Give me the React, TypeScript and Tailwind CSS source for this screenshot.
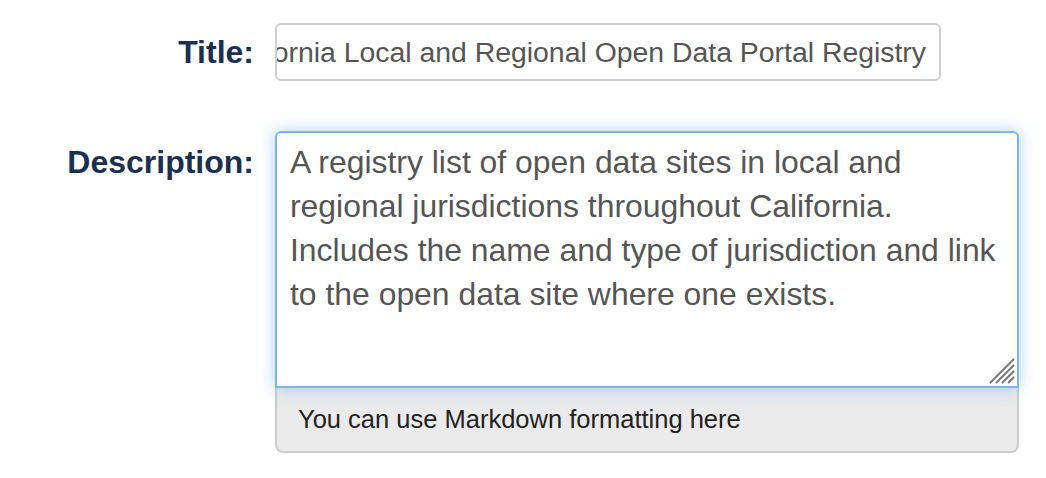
import React from 'react';

export default function App() {
    const title = "California Local and Regional Open Data Portal Registry";
    const description =
        "A registry list of open data sites in local and regional jurisdictions throughout California. Includes the name and type of jurisdiction and link to the open data site where one exists.";

    return (
        <div className="w-[1046px] h-[478px] bg-white font-['Liberation_Sans',Arial,sans-serif]">
            <div className="flex flex-col gap-[50px] pt-[23px]">
                {/* title row */}
                <div className="flex items-center">
                    <label className="w-[254px] text-right text-[32px] leading-[44px] font-bold text-[#1b3050]">Title:</label>
                    <div className="ml-[21px] w-[666px] h-[58px] border-2 border-[#cfcfcf] rounded-[6px] px-[13px] overflow-hidden flex items-center justify-end">
                        <span className="whitespace-nowrap text-[28.4px] text-[#555]">{title}</span>
                    </div>
                </div>

                {/* description row */}
                <div className="flex items-start">
                    <label className="w-[254px] text-right text-[32px] leading-[44px] font-bold text-[#1b3050] pt-[9px]">Description:</label>
                    <div className="ml-[21px] w-[744px] flex flex-col">
                        <div className="relative h-[257px] border-2 border-[#7db5e8] rounded-t-[6px] shadow-[0_0_16px_rgba(102,175,233,0.55)] pl-[13px] pr-[10px] pt-[7px] bg-white">
                            <p className="text-[31.9px] leading-[44px] text-[#555]">{description}</p>
                            {/* resize grip */}
                            <svg className="absolute right-[2px] bottom-[2px]" width="26" height="26" viewBox="0 0 26 26">
                                <line x1="25" y1="1" x2="1" y2="25" stroke="#777" strokeWidth="2" />
                                <line x1="25" y1="7" x2="7" y2="25" stroke="#777" strokeWidth="2" />
                                <line x1="25" y1="13" x2="13" y2="25" stroke="#777" strokeWidth="2" />
                                <line x1="25" y1="19" x2="19" y2="25" stroke="#777" strokeWidth="2" />
                            </svg>
                        </div>
                        <div className="h-[65px] bg-[#eaeaea] border-2 border-t-0 border-[#cbcbcb] rounded-b-[8px] px-[21px] flex items-center">
                            <span className="text-[25.5px] text-[#222]">You can use Markdown formatting here</span>
                        </div>
                    </div>
                </div>
            </div>
        </div>
    );
}
